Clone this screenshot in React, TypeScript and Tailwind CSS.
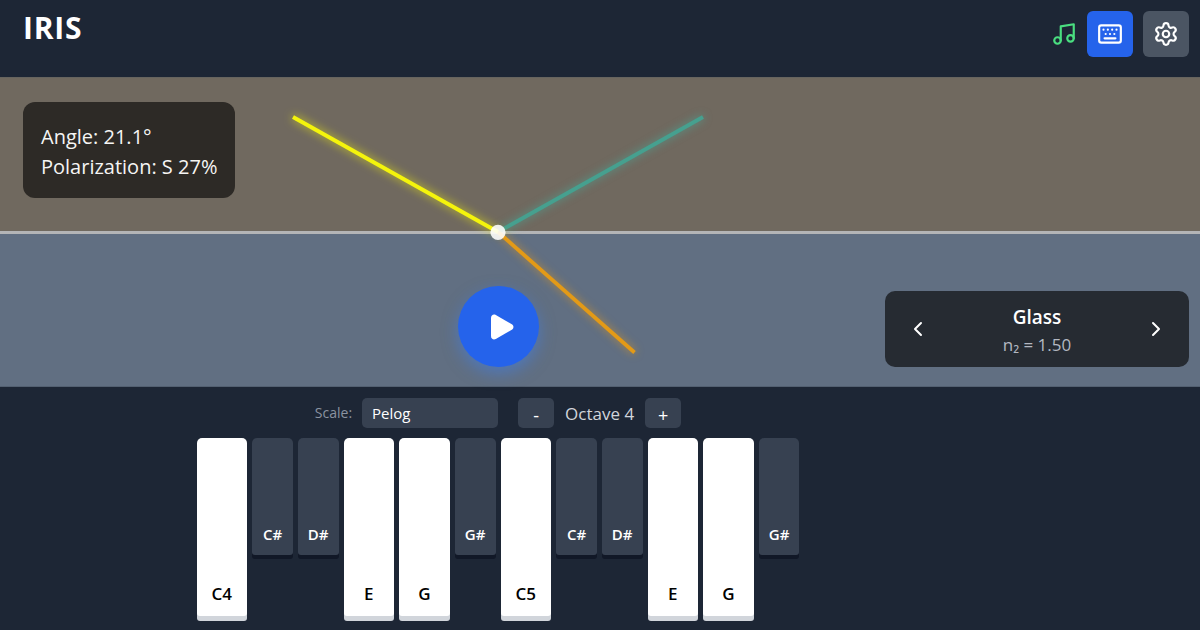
import type { ReactNode } from "react";
import { useState } from "react";
import { ChevronLeft, ChevronRight, Keyboard, Music, Settings } from "lucide-react";

type Key = { note: string; sharp?: boolean };

const KEYS: Key[] = [
  { note: "C4" },
  { note: "C#", sharp: true },
  { note: "D#", sharp: true },
  { note: "E" },
  { note: "G" },
  { note: "G#", sharp: true },
  { note: "C5" },
  { note: "C#", sharp: true },
  { note: "D#", sharp: true },
  { note: "E" },
  { note: "G" },
  { note: "G#", sharp: true },
];

function IconButton({ label, className, children }: { label: string; className: string; children: ReactNode }) {
  return (
    <button type="button" aria-label={label} className={`flex size-[46px] items-center justify-center rounded-md text-white ${className}`}>
      {children}
    </button>
  );
}

function Header() {
  return (
    <header className="flex items-start justify-between pt-[11px] pr-[11px] pb-5 pl-[23px]">
      <h1 className="text-[30px] leading-[34px] font-bold tracking-wide text-white">IRIS</h1>
      <div className="flex items-center gap-[10px]">
        <Music className="size-[26px] text-[#4ade80]" />
        <IconButton label="Keyboard" className="bg-[#2563eb]">
          <Keyboard className="size-[26px]" />
        </IconButton>
        <IconButton label="Settings" className="bg-[#4b5563]">
          <Settings className="size-[26px]" />
        </IconButton>
      </div>
    </header>
  );
}

function Rays() {
  return (
    <svg viewBox="0 0 996 310" fill="none" className="absolute inset-y-0 left-0 h-full w-[83%] overflow-visible" aria-hidden="true">
      <g strokeWidth="3.8">
        <path d="M498 155 703 40" stroke="#46a08f" className="drop-shadow-[0_0_4px_#2dd4bf80]" />
        <path d="M498 155 634.500 275.500" stroke="#e39a17" className="drop-shadow-[0_0_4px_#f59e0bb0]" />
        <path d="M293 40 498 155" stroke="#f4f40c" strokeWidth="4" className="drop-shadow-[0_0_5px_#ffff00c0]" />
      </g>
      <circle cx="498" cy="155.400" r="7.600" fill="#fff" fillOpacity=".88" />
    </svg>
  );
}

function Stage() {
  return (
    <main className="relative flex flex-col">
      <section className="flex h-[154px] items-start border-t border-[#66645f] bg-[#70695f] px-[23px] pt-6">
        <div className="relative z-10 rounded-xl bg-[#2d2a26] px-[18px] pt-5 pb-4 text-[20px] leading-[30px] text-[#f5f5f4]">
          <p>Angle: 21.1°</p>
          <p>Polarization: S 27%</p>
        </div>
      </section>
      <div className="h-[3px] bg-[#b4b5b7]" />
      <section className="h-[153px] border-b border-[#536071] bg-[#616f82]" />
      <Rays />
      <div className="absolute bottom-5 left-0 flex w-[83%] justify-center">
        <button
          type="button"
          aria-label="Play"
          className="flex size-[81px] items-center justify-center rounded-full bg-[#2563eb] text-white shadow-[0_6px_16px_#3b82f680]"
        >
          <svg viewBox="0 0 24 26" className="ml-2 h-[26px] w-6" fill="currentColor" aria-hidden="true">
            <path d="M1 4C1 1.200 3.400-.2 5.800 1L21.800 10.300c2.200 1.300 2.200 4.100 0 5.400L5.800 25C3.400 26.200 1 24.800 1 22Z" />
          </svg>
        </button>
      </div>
      <div className="absolute right-[11px] bottom-5 flex w-[304px] items-center justify-between rounded-[10px] bg-[#262b32] px-[21px] py-[10px] text-white">
        <button type="button" aria-label="Previous material">
          <ChevronLeft className="size-6" />
        </button>
        <div className="text-center">
          <p className="text-[19px] leading-8 font-semibold">Glass</p>
          <p className="text-[17px] leading-6 text-[#b3b8c1]">n₂ = 1.50</p>
        </div>
        <button type="button" aria-label="Next material">
          <ChevronRight className="size-6" />
        </button>
      </div>
    </main>
  );
}

function Controls() {
  const [scale, setScale] = useState("Pelog");
  const [octave, setOctave] = useState(4);
  const step = "flex h-[30px] w-9 items-center justify-center rounded-[5px] bg-[#374151] pt-1 text-[18px] leading-6 text-white";
  return (
    <div className="flex items-center justify-center gap-5">
      <div className="flex items-center gap-[10px]">
        <label htmlFor="scale" className="text-[14px] leading-6 text-[#8b93a1]">
          Scale:
        </label>
        <select
          id="scale"
          value={scale}
          onChange={(e) => setScale(e.target.value)}
          className="h-[30px] w-[136px] appearance-none rounded-[5px] bg-[#374151] px-[10px] text-[15px] leading-6 text-white"
        >
          <option>Pelog</option>
        </select>
      </div>
      <div className="flex items-center gap-[11px]">
        <button type="button" aria-label="Octave down" className={step} onClick={() => setOctave(octave - 1)}>
          -
        </button>
        <span className="pt-[2px] text-[17px] leading-6 text-[#d1d5db]">Octave {octave}</span>
        <button type="button" aria-label="Octave up" className={step} onClick={() => setOctave(octave + 1)}>
          +
        </button>
      </div>
    </div>
  );
}

function Piano() {
  return (
    <div className="mx-auto flex w-full max-w-[603px] items-start justify-center gap-[5px]">
      {KEYS.map((key, i) =>
        key.sharp ? (
          <button
            key={i}
            type="button"
            className="flex h-[117px] w-[41px] items-end justify-center rounded-t-[5px] rounded-b-[3px] bg-[#374151] pb-[9px] text-[15px] leading-6 font-semibold text-white shadow-[0_4px_0_#111827]"
          >
            {key.note}
          </button>
        ) : (
          <button
            key={i}
            type="button"
            className="flex h-[178px] w-[51px] items-end justify-center rounded-t-[5px] rounded-b-[3px] bg-white pb-[10px] text-[17px] leading-6 font-semibold text-black shadow-[0_5px_0_#d1d5db]"
          >
            {key.note}
          </button>
        ),
      )}
    </div>
  );
}

export default function App() {
  return (
    <div className="min-h-screen overflow-hidden bg-[#1d2635] font-['Open_Sans','Noto_Sans',sans-serif]">
      <Header />
      <Stage />
      <section className="flex w-[83%] flex-col gap-[10px] pt-[11px] pb-3">
        <Controls />
        <Piano />
      </section>
    </div>
  );
}
